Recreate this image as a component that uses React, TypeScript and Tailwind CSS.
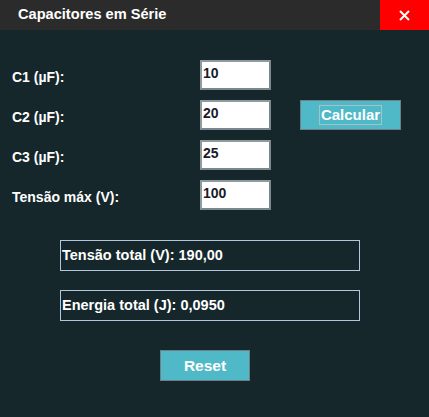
import React from "react";

const font = { fontFamily: '"Liberation Sans", Arial, sans-serif' };

function Row({ label, value, extra }: { label: string; value: string; extra?: React.ReactNode }) {
  return (
    <div className="flex items-center h-[30px]">
      <div className="w-[188px] pt-[4px] text-[14px] font-bold text-white">{label}</div>
      <div className="w-[71px] h-[30px] bg-white border-2 border-t-[#8f9aa1] border-l-[#8f9aa1] border-r-[#7b8790] border-b-[#7b8790] px-[1px] pt-[2px] text-[14px] font-bold text-[#1a1a2a] leading-[18px]">
        {value}
      </div>
      {extra}
    </div>
  );
}

export default function App() {
  return (
    <div className="w-[429px] h-[417px] bg-[#15272b] flex flex-col" style={font}>
      <div className="h-[30px] bg-[#2b2b2b] flex items-center justify-between">
        <div className="pl-[18px] text-[14.6px] font-bold text-white">Capacitores em Série</div>
        <div className="w-[49px] h-[30px] bg-[#ff0000] flex items-center justify-center">
          <svg width="11" height="11" viewBox="0 0 11 11">
            <path d="M1 1 L10 10 M10 1 L1 10" stroke="white" strokeWidth="2" />
          </svg>
        </div>
      </div>
      <div className="flex flex-col pl-[12px] pt-[30px] gap-[10px]">
        <Row label="C1 (µF):" value="10" />
        <Row
          label="C2 (µF):"
          value="20"
          extra={
            <div className="ml-[29px] w-[101px] h-[30px] bg-[#4fb9c7] border border-[#6d8088] flex items-center justify-center">
              <span className="border border-[#a9c0c8] px-[1px] text-[15px] font-bold text-white leading-[18px]">Calcular</span>
            </div>
          }
        />
        <Row label="C3 (µF):" value="25" />
        <Row label="Tensão máx (V):" value="100" />
      </div>
      <div className="flex flex-col pl-[60px] pt-[30px] gap-[19px]">
        <div className="w-[300px] h-[31px] border border-[#b4c6dc] flex items-center px-[1px] text-[14.5px] font-bold text-white">
          Tensão total (V): 190,00
        </div>
        <div className="w-[300px] h-[31px] border border-[#b4c6dc] flex items-center px-[1px] text-[14.5px] font-bold text-white">
          Energia total (J): 0,0950
        </div>
      </div>
      <div className="flex pl-[160px] pt-[29px]">
        <div className="w-[90px] h-[31px] bg-[#4fb9c7] border border-[#6d8088] flex items-center justify-center text-[15.5px] font-bold text-white">
          Reset
        </div>
      </div>
    </div>
  );
}
